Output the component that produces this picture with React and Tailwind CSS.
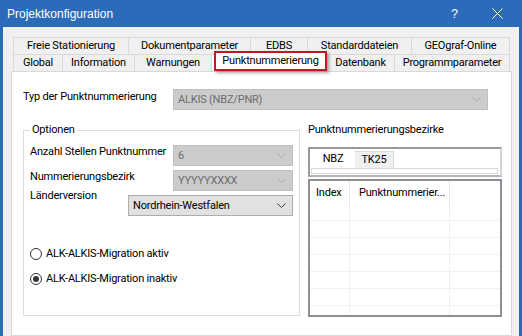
import React from "react";

const row1 = [
    { label: "Freie Stationierung", w: "w-[115px]" },
    { label: "Dokumentparameter", w: "w-[122px]" },
    { label: "EDBS", w: "w-[57px]" },
    { label: "Standarddateien", w: "w-[104px]" },
    { label: "GEOgraf-Online", w: "w-[99px]" },
];

const row2 = [
    { label: "Global", w: "w-[49px]" },
    { label: "Information", w: "w-[72px]" },
    { label: "Warnungen", w: "w-[77px]" },
    { label: "Punktnummerierung", w: "w-[115px]", active: true },
    { label: "Datenbank", w: "w-[68px]" },
    { label: "Programmparameter", w: "w-[116px]" },
];

const Chevron = ({ color }) => (
    <svg width="9" height="5" viewBox="0 0 9 5" className="shrink-0">
        <path d="M0.5 0.5 L4.5 4.5 L8.5 0.5" fill="none" stroke={color} strokeWidth="1" />
    </svg>
);

const Combo = ({ value, disabled, className = "" }) => (
    <div
        className={`flex items-center justify-between h-[21px] pl-[4px] pr-[6px] border ${
            disabled
                ? "bg-[#cccccc] border-[#bfbfbf] text-[#6d6d6d]"
                : "bg-[#e1e1e1] border-[#adadad] text-black"
        } ${className}`}
    >
        <span>{value}</span>
        <Chevron color={disabled ? "#a9a9a9" : "#3c3c3c"} />
    </div>
);

const Radio = ({ label, checked }) => (
    <div className="flex items-center h-[14px]">
        <div className="w-[12px] h-[12px] rounded-full border border-[#333333] bg-white flex items-center justify-center">
            {checked && <div className="w-[6px] h-[6px] rounded-full bg-[#333333]"></div>}
        </div>
        <span className="ml-[4px]">{label}</span>
    </div>
);

const TabRow = ({ tabs }) => (
    <div className="flex ml-[2px] w-[497px]">
        {tabs.map((t, i) => (
            <div
                key={t.label}
                className={`${t.w} h-[17px] border-t border-l border-[#d9d9d9] flex items-center justify-center ${
                    i === tabs.length - 1 ? "border-r" : ""
                } ${t.active ? "relative bg-white" : "bg-[#f0f0f0]"}`}
            >
                {t.active ? (
                    <div className="absolute -top-[4px] left-[2px] -right-[1px] bottom-0 z-10 bg-white border-2 border-[#bd1a22] shadow-[2px_2px_3px_rgba(0,0,0,0.35)] flex items-center justify-center">
                        {t.label}
                    </div>
                ) : (
                    t.label
                )}
            </div>
        ))}
    </div>
);

export default function App() {
    return (
        <div className="w-[522px] h-[336px] bg-[#2b6bb9] flex flex-col overflow-hidden font-['Roboto',sans-serif] text-[11px] leading-[14px] tracking-[-0.2px] text-black">
            <div className="h-[27px] shrink-0 flex items-center pl-[7px] text-white font-['Liberation_Sans',sans-serif] text-[12px] tracking-normal">
                <span>Projektkonfiguration</span>
                <span className="ml-auto mr-[34px]">?</span>
                <svg width="11" height="11" viewBox="0 0 11 11" className="mr-[19px]">
                    <path d="M0.5 0.5 L10.5 10.5 M10.5 0.5 L0.5 10.5" stroke="white" strokeWidth="1" />
                </svg>
            </div>

            <div className="flex-1 mx-[3px] bg-[#f0f0f0] pt-[10px] pl-[8px] pr-[7px] flex flex-col">
                <TabRow tabs={row1} />
                <TabRow tabs={row2} />

                <div className="flex-1 border border-[#d9d9d9] bg-white pl-[11px] pt-[17px]">
                    <div className="flex items-start">
                        <span className="w-[150px] mt-[1px]">Typ der Punktnummerierung</span>
                        <Combo value="ALKIS (NBZ/PNR)" disabled className="w-[315px]" />
                    </div>

                    <div className="flex items-start mt-[13px]">
                        <fieldset className="w-[277px] h-[193px] border border-[#dcdcdc] px-[6px] m-0">
                            <legend className="px-[2px] leading-[14px]">Optionen</legend>
                            <div className="flex flex-col gap-[4px] mt-[8px]">
                                <div className="flex items-start">
                                    <span className="w-[143px]">Anzahl Stellen Punktnummer</span>
                                    <Combo value="6" disabled className="w-[120px]" />
                                </div>
                                <div className="flex items-start">
                                    <span className="w-[143px]">Nummerierungsbezirk</span>
                                    <Combo value="YYYYYXXXX" disabled className="w-[120px]" />
                                </div>
                                <div className="flex items-start">
                                    <span className="w-[98px] -mt-[6px]">Länderversion</span>
                                    <Combo value="Nordrhein-Westfalen" className="w-[165px]" />
                                </div>
                            </div>
                            <div className="flex flex-col gap-[11px] mt-[31px]">
                                <Radio label="ALK-ALKIS-Migration aktiv" />
                                <Radio label="ALK-ALKIS-Migration inaktiv" checked />
                            </div>
                        </fieldset>

                        <div className="w-[194px] ml-[8px] flex flex-col">
                            <span>Punktnummerierungsbezirke</span>
                            <div className="mt-[10px] h-[30px] border-2 border-t-[#9a9a9a] border-l-[#9a9a9a] border-r-[#d4d4d4] border-b-[#b4b4b4] bg-white pl-[1px] flex flex-col">
                                <div className="flex items-end h-[19px]">
                                    <div className="w-[44px] h-[19px] bg-white flex items-center justify-center">NBZ</div>
                                    <div className="w-[39px] h-[17px] bg-[#f0f0f0] border-t border-r border-[#d9d9d9] flex items-center justify-center">
                                        TK25
                                    </div>
                                </div>
                                <div className="w-[187px] h-[6px] border border-[#d9d9d9] bg-white"></div>
                            </div>

                            <div className="mt-[2px] h-[138px] border-2 border-[#8e8f96] bg-white overflow-hidden">
                                <div className="flex h-[23px]">
                                    <div className="w-[40px] border-r border-[#e5e5e5] pl-[6px] flex items-center">Index</div>
                                    <div className="w-[100px] border-r border-[#e5e5e5] pl-[9px] flex items-center">
                                        Punktnummerier...
                                    </div>
                                </div>
                                {[0, 1, 2, 3, 4, 5, 6].map((r) => (
                                    <div key={r} className="flex h-[17px] border-b border-[#f0f0f0]">
                                        <div className="w-[40px] border-r border-[#f0f0f0]"></div>
                                        <div className="w-[100px] border-r border-[#f0f0f0]"></div>
                                    </div>
                                ))}
                            </div>
                        </div>
                    </div>
                </div>
            </div>
        </div>
    );
}
